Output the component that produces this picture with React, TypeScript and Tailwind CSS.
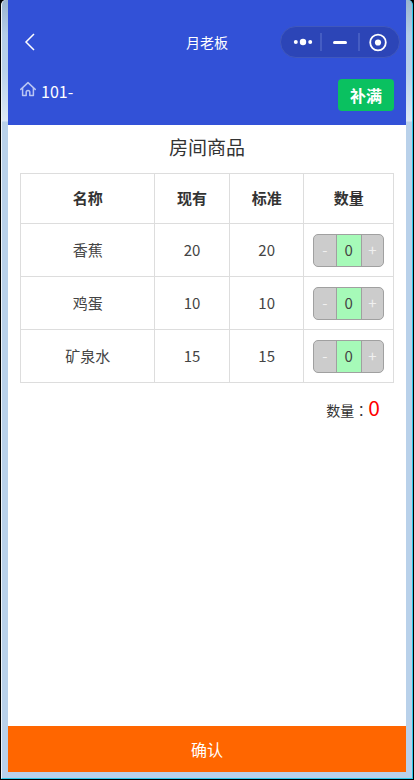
import React, { useState } from 'react';

interface Goods {
  id: number;
  name: string;
  current: number;
  standard: number;
}

const goodsList: Goods[] = [
  { id: 1, name: '香蕉', current: 20, standard: 20 },
  { id: 2, name: '鸡蛋', current: 10, standard: 10 },
  { id: 3, name: '矿泉水', current: 15, standard: 15 },
];

interface StepperProps {
  label: string;
  value: number;
  max: number;
  onChange: (value: number) => void;
}

const Stepper: React.FC<StepperProps> = ({ label, value, max, onChange }) => {
  return (
    <div className="mx-auto flex h-[33px] w-[71px] overflow-hidden rounded-[5px] border border-[#a0a0a0] bg-[#cccccc] text-[15px]">
      <button
        type="button"
        aria-label={`${label} 减少`}
        className="flex-1 text-[#f0f0f0]"
        onClick={() => onChange(Math.max(0, value - 1))}
      >
        -
      </button>
      <input
        type="text"
        aria-label={`${label} 数量`}
        value={value}
        readOnly
        className="w-[26px] border-x border-[#a0a0a0] bg-[#a6fab8] text-center text-[#444444] outline-none"
      />
      <button
        type="button"
        aria-label={`${label} 增加`}
        className="flex-1 text-[#f0f0f0]"
        onClick={() => onChange(Math.min(max, value + 1))}
      >
        +
      </button>
    </div>
  );
};

const Capsule: React.FC = () => {
  return (
    <div className="flex h-8 w-[120px] items-center rounded-full border border-[#4058bd] bg-[#2c45b7]">
      <button type="button" aria-label="更多" className="flex h-full flex-1 items-center justify-center pl-1">
        <svg className="h-5 w-5" viewBox="0 0 20 20" fill="#fff">
          <circle cx="2.8" cy="10" r="2" />
          <circle cx="10" cy="10" r="3.2" />
          <circle cx="17.2" cy="10" r="2" />
        </svg>
      </button>
      <span className="h-[18px] w-0.5 bg-[#455dc3]" />
      <button type="button" aria-label="最小化" className="flex h-full w-9 items-center justify-center">
        <svg className="h-5 w-5" viewBox="0 0 20 20">
          <path d="M4.5 10.5h11" stroke="#fff" strokeWidth="3" strokeLinecap="round" />
        </svg>
      </button>
      <span className="h-[18px] w-0.5 bg-[#455dc3]" />
      <button type="button" aria-label="关闭" className="flex h-full flex-1 items-center justify-center pr-1">
        <svg className="h-5 w-5" viewBox="0 0 20 20">
          <circle cx="10" cy="10.5" r="7.8" fill="none" stroke="#fff" strokeWidth="1.8" />
          <circle cx="10" cy="10.5" r="3.1" fill="#fff" />
        </svg>
      </button>
    </div>
  );
};

const App: React.FC = () => {
  const [counts, setCounts] = useState<Record<number, number>>({});

  const total = goodsList.reduce((sum, item) => sum + (counts[item.id] || 0), 0);

  const handleChange = (id: number, value: number) => {
    setCounts({ ...counts, [id]: value });
  };

  const handleFill = () => {
    setCounts(Object.fromEntries(goodsList.map(item => [item.id, item.standard - item.current])));
  };

  return (
    <div className="flex min-h-screen bg-black px-px pb-px font-['Noto_Sans_CJK_SC',sans-serif] text-[#333333]">
      {/* 窗口边框 */}
      <div className="flex flex-1 rounded-t-[5px] border-r border-b border-l border-r-[#2cc8e8] border-b-[#2cc8e8] border-l-[#eef4fa] bg-[#b9d1ea] bg-[linear-gradient(#9ab4cf,#b4cde8_35px,#b9d1ea_70px,#dce8f5_121px,#b9d1ea_122px)] px-1.5 pb-1.5">
        <div className="flex flex-1 flex-col bg-white">
          <header className="bg-[#3251d7] pt-[26px] pb-3.5 text-white">
            <div className="grid grid-cols-[1fr_auto_1fr] items-center px-1.5">
              <button type="button" aria-label="返回" className="w-fit pl-1.5">
                <svg className="h-5 w-5" viewBox="0 0 20 20" fill="none" stroke="#fff" strokeWidth="1.5">
                  <path d="M14 2L6 10L14 18" />
                </svg>
              </button>
              <h1 className="text-sm">月老板</h1>
              <div className="flex justify-end">
                <Capsule />
              </div>
            </div>

            <div className="mt-[21px] flex h-8 items-center justify-between px-3">
              <div className="flex h-full items-start gap-[5px]">
                <svg
                  className="mt-0.5 h-4 w-4"
                  viewBox="0 0 16 16"
                  fill="none"
                  stroke="#b9c5f3"
                  strokeWidth="1.5"
                  strokeLinejoin="round"
                  strokeLinecap="round"
                >
                  <path d="M0.8 8.4L8 1.6L15.2 8.4" />
                  <path d="M2.6 7.4v7h3.6v-3.2a1.8 1.8 0 0 1 3.6 0v3.2h3.6v-7" />
                </svg>
                <span className="text-base leading-6">101-</span>
              </div>
              <button
                type="button"
                className="h-8 w-14 rounded bg-[#0ac160] text-base font-bold"
                onClick={handleFill}
              >
                补满
              </button>
            </div>
          </header>

          <main className="flex-1 px-3">
            <h2 className="pt-2 pb-3 text-center text-[19px] leading-7">房间商品</h2>
            <table className="w-full table-fixed border-collapse text-center text-[15px]">
              <colgroup>
                <col className="w-[36%]" />
                <col className="w-[20%]" />
                <col className="w-[20%]" />
                <col className="w-[24%]" />
              </colgroup>
              <thead>
                <tr className="h-[50px]">
                  <th className="border border-[#dddddd]">名称</th>
                  <th className="border border-[#dddddd]">现有</th>
                  <th className="border border-[#dddddd]">标准</th>
                  <th className="border border-[#dddddd]">数量</th>
                </tr>
              </thead>
              <tbody>
                {goodsList.map(item => (
                  <tr key={item.id} className="h-[53px] text-[#444444]">
                    <td className="border border-[#dddddd]">{item.name}</td>
                    <td className="border border-[#dddddd]">{item.current}</td>
                    <td className="border border-[#dddddd]">{item.standard}</td>
                    <td className="border border-[#dddddd]">
                      <Stepper
                        label={item.name}
                        value={counts[item.id] || 0}
                        max={item.standard}
                        onChange={value => handleChange(item.id, value)}
                      />
                    </td>
                  </tr>
                ))}
              </tbody>
            </table>
            <p className="flex items-baseline justify-end pt-2 pr-3.5 text-sm">
              <span>数量</span>
              <span className="font-['Noto_Sans_CJK_TC',sans-serif]">：</span>
              <span className="text-[21px] leading-8 text-[#ff0000]">{total}</span>
            </p>
          </main>

          <button type="button" className="h-[46px] w-full bg-[#ff6600] text-base text-white">
            确认
          </button>
        </div>
      </div>
    </div>
  );
};

export default App;
